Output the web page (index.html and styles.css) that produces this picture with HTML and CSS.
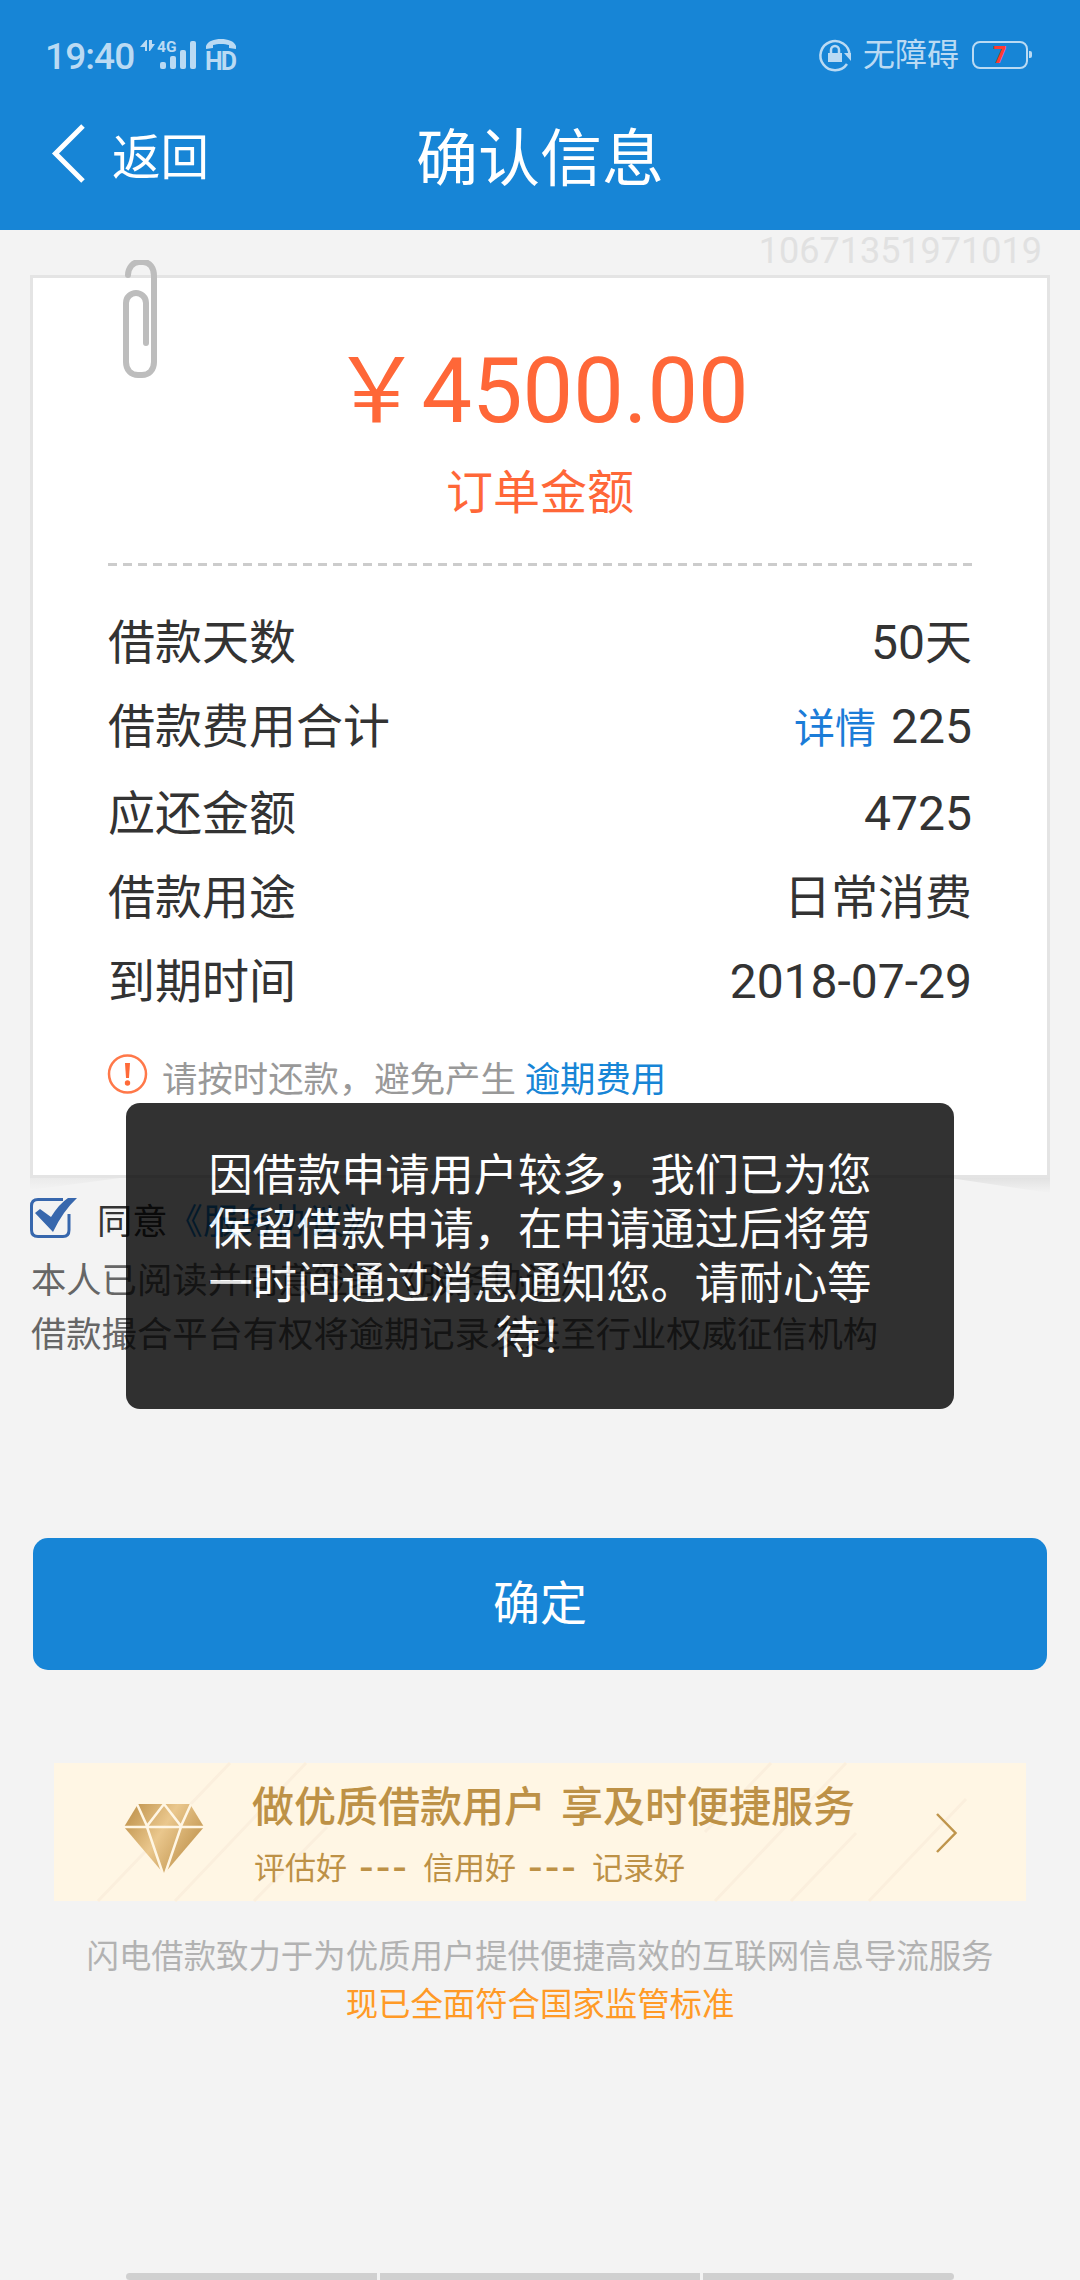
FILE: index.html
```html
<!DOCTYPE html>
<html lang="zh-CN">
<head>
  <meta charset="UTF-8">
  <meta name="viewport" content="width=device-width, initial-scale=1.0">
  <title>确认信息</title>
  <link rel="stylesheet" href="styles.css">
</head>
<body>
  <header class="header">
    <div class="status-bar">
      <span class="time">19:40</span>
      <svg class="signal" width="57" height="32" viewBox="0 0 57 32">
        <path d="M6 1v11H4V8H-1l6-7zM8 1h3v4h3l-5 7H8z"/>
        <text x="16" y="13" class="net">4G</text>
        <rect x="19" y="23" width="6" height="7" rx="2"/>
        <rect x="29" y="17" width="6" height="13" rx="2"/>
        <rect x="39" y="11" width="6" height="19" rx="2"/>
        <rect x="49" y="2" width="6" height="28" rx="2"/>
      </svg>
      <svg class="volte" width="32" height="32" viewBox="0 0 32 32">
        <path d="M0 10V7C2 2 8 0 15 0s13 2 15 7v3l-7-1V6c-4-1.500-12-1.500-16 0v3z"/>
        <text x="-1" y="31" class="hd">HD</text>
      </svg>
      <span class="spacer"></span>
      <svg class="lock" width="32" height="32" viewBox="0 0 32 32">
        <path d="M28 25A14.600 14.600 0 1 1 30.600 16" fill="none" stroke="#badaf3" stroke-width="2.500"/>
        <path d="M25 14h7v8z"/>
        <rect x="9" y="14" width="14" height="9"/>
        <path d="M12 15v-4a4 4 0 0 1 8 0v4" fill="none" stroke="#badaf3" stroke-width="2.500"/>
      </svg>
      <span class="mode">无障碍</span>
      <span class="battery">7</span>
    </div>
    <nav class="nav">
      <a class="back">
        <svg width="36" height="60" viewBox="0 0 36 60"><path d="M33 2L5.500 29.500L33 57" fill="none" stroke="#fff" stroke-width="5"/></svg>
        <span>返回</span>
      </a>
      <h1 class="title">确认信息</h1>
    </nav>
  </header>

  <main class="main">
    <div class="serial">10671351971019</div>

    <section class="card">
      <svg class="clip" width="36" height="120" viewBox="0 0 36 120">
        <path d="M5 15C5 8 10 2 16 2h4C27 2 31 8 31 16v86c0 8-5 13-12 13h-4C8 115 3 110 3 102V43C3 37 8 33 13 33s10 4 10 10v40" fill="none" stroke="#bdbdbd" stroke-width="6" stroke-linecap="round"/>
      </svg>
      <div class="amount">￥4500.00</div>
      <div class="amount-label">订单金额</div>
      <div class="divider"></div>
      <ul class="rows">
        <li><span>借款天数</span><span><b>50</b>天</span></li>
        <li><span>借款费用合计</span><span><a class="detail">详情</a><b>225</b></span></li>
        <li><span>应还金额</span><span><b>4725</b></span></li>
        <li><span>借款用途</span><span>日常消费</span></li>
        <li><span>到期时间</span><span><b>2018-07-29</b></span></li>
      </ul>
      <div class="notice">
        <svg width="40" height="40" viewBox="0 0 40 40">
          <circle cx="19.500" cy="20" r="18.500" fill="none" stroke="#ff7849" stroke-width="2.500"/>
          <path d="M17 9h5l-1 15h-3z" fill="#ff6a38"/>
          <circle cx="19.500" cy="29" r="2.700" fill="#ff6a38"/>
        </svg>
        <span>请按时还款，避免产生 <a>逾期费用</a></span>
      </div>
      <svg class="curl" width="1020" height="16" viewBox="0 0 1020 16">
        <defs>
          <linearGradient id="fade" x1="0" y1="0" x2="0" y2="1">
            <stop offset="0" stop-color="#e2e2e2"/>
            <stop offset="1" stop-color="#f3f3f3"/>
          </linearGradient>
        </defs>
        <path d="M0 0h90L0 12z" fill="url(#fade)" opacity="0.500"/>
        <path d="M1020 0H920l100 15z" fill="url(#fade)"/>
      </svg>
    </section>

    <section class="agreement">
      <label class="agree">
        <svg width="47" height="40" viewBox="0 0 47 40">
          <path d="M33 1.500H8Q1.500 1.500 1.500 8v24q0 6.500 6.500 6.500h25q6 0 6-6.500V16" fill="none" stroke="#3767ad" stroke-width="3"/>
          <path d="M5 15l5-4 11 8Q29 6 38 0h9Q33 13 23 34z" fill="#3767ad"/>
        </svg>
        <span>同意<a>《服务协议》</a></span>
      </label>
      <p>本人已阅读并同意签署《服务协议》</p>
      <p>借款撮合平台有权将逾期记录发送至行业权威征信机构</p>
    </section>

    <button class="submit">确定</button>

    <section class="banner">
      <svg class="stripes" width="972" height="138" viewBox="0 0 972 138">
        <path d="M176 0L44 138M252 0L121 138M273 64L200 138M717 0L651 69M792 0L661 138M802 70L737 138M912 36L815 138" stroke="#fbefdd" stroke-width="3"/>
      </svg>
      <svg class="diamond" width="80" height="70" viewBox="0 0 80 70">
        <defs>
          <linearGradient id="gold" x1="0" y1="0.100" x2="1" y2="0.650">
            <stop offset="0" stop-color="#bd9049"/>
            <stop offset="0.480" stop-color="#eac78d"/>
            <stop offset="1" stop-color="#bd9049"/>
          </linearGradient>
        </defs>
        <path d="M14 0h52l14 23-40 47L0 23z" fill="url(#gold)"/>
        <path d="M0 23h80M13 0l10 22L40 0l17 22L67 0M23 23l16 47h2l16-47" fill="none" stroke="#fff6e4" stroke-width="2.500"/>
      </svg>
      <div class="banner-text">
        <div class="banner-title"><span>做优质借款用户</span><span>享及时便捷服务</span></div>
        <div class="banner-sub"><span>评估好</span><i>---</i><span>信用好</span><i>---</i><span>记录好</span></div>
      </div>
      <svg class="arrow" width="22" height="42" viewBox="0 0 22 42"><path d="M1 2l18.500 19L1 40" fill="none" stroke="#bf954c" stroke-width="2.500"/></svg>
    </section>

    <footer class="footer">
      <p>闪电借款致力于为优质用户提供便捷高效的互联网信息导流服务</p>
      <p class="standard">现已全面符合国家监管标准</p>
    </footer>
  </main>

  <div class="tabs"><span></span><span></span><span></span></div>

  <div class="toast">因借款申请用户较多，我们已为您保留借款申请，在申请通过后将第一时间通过消息通知您。请耐心等待！</div>
</body>
</html>
```
FILE: styles.css
```css
* {
  box-sizing: border-box;
  margin: 0;
  padding: 0;
}
body {
  position: relative;
  display: flex;
  flex-direction: column;
  width: 1080px;
  height: 2280px;
  overflow: hidden;
  background: #f3f3f3;
  font-family: Roboto, "Noto Sans CJK SC", sans-serif;
  font-size: 47px;
  color: #333;
}
svg {
  display: block;
  flex: none;
  overflow: visible;
}
.header {
  height: 230px;
  background: #1785d6;
  color: #fff;
}
.status-bar {
  display: flex;
  align-items: center;
  height: 84px;
  padding: 26px 48px 0 45px;
  color: #badaf3;
  fill: #badaf3;
}
.time {
  width: 96px;
  padding-top: 3px;
  font-size: 37px;
  font-weight: 500;
  letter-spacing: -0.9px;
  line-height: 40px;
}
.net {
  font-size: 15.5px;
  font-weight: 700;
}
.hd {
  font-size: 25px;
  font-weight: 700;
  letter-spacing: -2px;
}
.volte {
  margin-left: 8px;
  margin-right: 1px;
}
.spacer {
  flex: 1;
}
.mode {
  margin: 0 13px 0 12px;
  font-size: 32px;
  line-height: 40px;
}
.battery {
  position: relative;
  width: 56px;
  height: 28px;
  margin-right: 4px;
  border: 2px solid #badaf3;
  border-radius: 8px;
  color: #ff3b30;
  font-size: 23px;
  font-weight: 900;
  line-height: 25px;
  text-align: center;
}
.battery::after {
  content: "";
  position: absolute;
  right: -6px;
  top: 8px;
  width: 3px;
  height: 7px;
  border-radius: 0 2px 2px 0;
  background: #badaf3;
}
.nav {
  display: grid;
  grid-template-columns: 1fr auto 1fr;
  align-items: center;
  height: 140px;
  padding: 0 50px;
}
.back {
  display: flex;
  align-items: center;
  gap: 26px;
  font-size: 48.5px;
}
.title {
  font-size: 62px;
  font-weight: 400;
}
.main {
  flex: 1;
  padding: 0 30px;
}
.serial {
  height: 45px;
  padding-right: 8px;
  color: #e1e1e1;
  font-size: 36px;
  line-height: 43px;
  text-align: right;
}
.card {
  position: relative;
  height: 903px;
  padding: 61px 75px 0;
  border: 3px solid #e4e4e4;
  background: #fff;
}
.clip {
  position: absolute;
  left: 90px;
  top: -18px;
  overflow: hidden;
}
.curl {
  position: absolute;
  left: -3px;
  top: 900px;
}
.amount {
  height: 106px;
  color: #ff6738;
  font-size: 90px;
  line-height: 106px;
  text-align: center;
}
.amount-label {
  height: 118px;
  color: #ff6738;
  line-height: 96px;
  text-align: center;
}
.divider {
  height: 3px;
  background: repeating-linear-gradient(90deg, #ccc 0 9px, transparent 9px 15px);
}
.rows {
  padding-top: 35px;
  list-style: none;
}
.rows li {
  display: flex;
  justify-content: space-between;
  height: 84px;
  line-height: 84px;
}
.rows li:nth-child(2) {
  height: 87px;
}
.rows b {
  font-size: 48px;
  font-weight: 400;
}
.detail {
  margin-right: 15px;
  color: #1b7cd8;
  font-size: 41px;
}
.notice {
  display: flex;
  align-items: center;
  gap: 14px;
  height: 60px;
  margin-top: 20px;
  color: #999;
  font-size: 35.4px;
}
.notice span {
  padding-top: 4px;
}
.notice a,
.agree a {
  color: #1785d6;
}
.agreement {
  height: 360px;
  padding-top: 20px;
  color: #666;
  font-size: 35.3px;
}
.agree {
  display: flex;
  align-items: center;
  gap: 20px;
  height: 40px;
  margin-bottom: 16px;
  color: #333;
}
.agreement p {
  height: 54px;
  padding-left: 1px;
  line-height: 54px;
  white-space: nowrap;
}
.submit {
  display: block;
  width: 1014px;
  height: 132px;
  margin: 0 3px;
  padding-bottom: 10px;
  border: none;
  border-radius: 15px;
  background: #1785d6;
  color: #fff;
  font-family: inherit;
  font-size: 47px;
}
.banner {
  position: relative;
  display: flex;
  align-items: center;
  height: 138px;
  margin: 93px 24px 0;
  padding: 0 68px 0 70px;
  background: #fff6e4;
  color: #bd9146;
}
.stripes {
  position: absolute;
  left: 0;
  top: 0;
}
.diamond {
  position: relative;
  margin-top: 13px;
}
.banner-text {
  position: relative;
  flex: 1;
  padding: 10px 0 0 48px;
}
.banner-title {
  display: flex;
  gap: 15px;
  height: 64px;
  font-size: 42px;
  font-weight: 500;
  line-height: 52px;
}
.banner-sub {
  display: flex;
  padding-left: 2px;
  font-size: 31px;
  line-height: 46px;
}
.banner-sub i {
  width: 76px;
  padding-left: 12px;
  font-family: "Liberation Sans", sans-serif;
  font-size: 44px;
  font-style: normal;
  letter-spacing: 2px;
  line-height: 40px;
}
.arrow {
  position: relative;
  margin-top: 2px;
}
.footer {
  padding-top: 32px;
  color: #b2b2b2;
  font-size: 32.4px;
  line-height: 48px;
  text-align: center;
  white-space: nowrap;
}
.standard {
  color: #ff9a26;
}
.tabs {
  display: flex;
  gap: 3px;
  height: 7px;
  margin: 0 126px;
  overflow: hidden;
  border-radius: 4px;
}
.tabs span {
  flex: 251;
  background: #d0d0d0;
}
.tabs span:nth-child(2) {
  flex: 320;
}
.toast {
  position: absolute;
  left: 126px;
  top: 1103px;
  width: 828px;
  height: 306px;
  padding: 46px 80px 0;
  border-radius: 14px;
  background: #000;
  opacity: 0.8;
  color: #fff;
  font-size: 44.2px;
  line-height: 54px;
  text-align: center;
}
```
